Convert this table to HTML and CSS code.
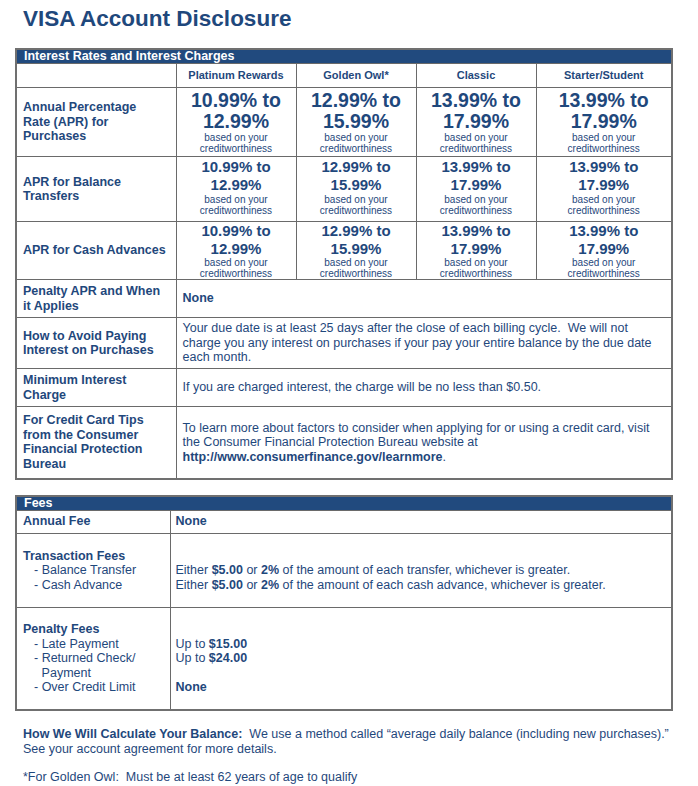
FILE: index.html
```html
<!DOCTYPE html>
<html>
<head>
<meta charset="utf-8">
<link rel="stylesheet" href="styles.css">
</head>
<body>
<div class="page">
  <h1 class="title">VISA Account Disclosure</h1>

  <table class="disc rates">
    <colgroup>
      <col class="c-label"><col class="c-rate"><col class="c-rate"><col class="c-rate"><col>
    </colgroup>
    <tr class="bar"><th colspan="5">Interest Rates and Interest Charges</th></tr>
    <tr class="colhead">
      <td></td><th>Platinum Rewards</th><th>Golden Owl*</th><th>Classic</th><th>Starter/Student</th>
    </tr>
    <tr class="r-purch">
      <th class="label">Annual Percentage Rate (APR) for Purchases</th>
      <td class="rate"><b>10.99% to<br>12.99%</b><span>based on your<br>creditworthiness</span></td>
      <td class="rate"><b>12.99% to<br>15.99%</b><span>based on your<br>creditworthiness</span></td>
      <td class="rate"><b>13.99% to<br>17.99%</b><span>based on your<br>creditworthiness</span></td>
      <td class="rate"><b>13.99% to<br>17.99%</b><span>based on your<br>creditworthiness</span></td>
    </tr>
    <tr class="r-bal">
      <th class="label">APR for Balance Transfers</th>
      <td class="rate"><b>10.99% to<br>12.99%</b><span>based on your<br>creditworthiness</span></td>
      <td class="rate"><b>12.99% to<br>15.99%</b><span>based on your<br>creditworthiness</span></td>
      <td class="rate"><b>13.99% to<br>17.99%</b><span>based on your<br>creditworthiness</span></td>
      <td class="rate"><b>13.99% to<br>17.99%</b><span>based on your<br>creditworthiness</span></td>
    </tr>
    <tr class="r-cash">
      <th class="label nowrap">APR for Cash Advances</th>
      <td class="rate"><b>10.99% to<br>12.99%</b><span>based on your<br>creditworthiness</span></td>
      <td class="rate"><b>12.99% to<br>15.99%</b><span>based on your<br>creditworthiness</span></td>
      <td class="rate"><b>13.99% to<br>17.99%</b><span>based on your<br>creditworthiness</span></td>
      <td class="rate"><b>13.99% to<br>17.99%</b><span>based on your<br>creditworthiness</span></td>
    </tr>
    <tr class="r-pen">
      <th class="label">Penalty APR and When it Applies</th>
      <td class="text" colspan="4"><b>None</b></td>
    </tr>
    <tr class="r-avoid">
      <th class="label">How to Avoid Paying Interest on Purchases</th>
      <td class="text" colspan="4">Your due date is at least 25 days after the close of each billing cycle.&nbsp; We will not charge you any interest on purchases if your pay your entire balance by the due date each month.</td>
    </tr>
    <tr class="r-min">
      <th class="label">Minimum Interest Charge</th>
      <td class="text" colspan="4">If you are charged interest, the charge will be no less than $0.50.</td>
    </tr>
    <tr class="r-tips">
      <th class="label">For Credit Card Tips from the Consumer Financial Protection Bureau</th>
      <td class="text" colspan="4">To learn more about factors to consider when applying for or using a credit card, visit the Consumer Financial Protection Bureau website at <b>http://www.consumerfinance.gov/learnmore</b>.</td>
    </tr>
  </table>

  <table class="disc fees">
    <colgroup><col class="c-flabel"><col></colgroup>
    <tr class="bar"><th colspan="2">Fees</th></tr>
    <tr class="f-annual">
      <th class="label">Annual Fee</th>
      <td class="text"><b>None</b></td>
    </tr>
    <tr class="f-trans">
      <td class="flabel">
        <b>Transaction Fees</b>
        <ul class="subs">
          <li>Balance Transfer</li>
          <li>Cash Advance</li>
        </ul>
      </td>
      <td class="fval">
        <div class="spacer"></div>
        <div>Either <b>$5.00</b> or <b>2%</b> of the amount of each transfer, whichever is greater.</div>
        <div>Either <b>$5.00</b> or <b>2%</b> of the amount of each cash advance, whichever is greater.</div>
      </td>
    </tr>
    <tr class="f-pen">
      <td class="flabel">
        <b>Penalty Fees</b>
        <ul class="subs">
          <li>Late Payment</li>
          <li>Returned Check/ Payment</li>
          <li>Over Credit Limit</li>
        </ul>
      </td>
      <td class="fval">
        <div class="spacer"></div>
        <div>Up to <b>$15.00</b></div>
        <div>Up to <b>$24.00</b></div>
        <div class="spacer"></div>
        <div><b>None</b></div>
      </td>
    </tr>
  </table>

  <div class="notes">
    <p><b>How We Will Calculate Your Balance:</b>&nbsp; We use a method called “average daily balance (including new purchases).” See your account agreement for more details.</p>
    <p>*For Golden Owl:&nbsp; Must be at least 62 years of age to qualify</p>
  </div>
</div>
</body>
</html>
```

FILE: styles.css
```css
html, body {
  margin: 0;
  padding: 0;
  background: #ffffff;
}

.page {
  width: 698px;
  padding: 0 0 0 15px;
  box-sizing: border-box;
  font-family: "Liberation Sans", Arial, sans-serif;
  color: #1f487c;
}

.title {
  margin: 6px 0 16px 8px;
  font-size: 22.5px;
  line-height: 26px;
  font-weight: bold;
}

.disc {
  border-collapse: collapse;
  table-layout: fixed;
  width: 658px;
  border: 2px solid #707070;
}

.disc td, .disc th {
  border: 1px solid #6a6a6a;
  padding: 0;
  font-size: 12.5px;
  line-height: 14.5px;
}

.c-label { width: 160px; }
.c-rate { width: 120px; }
.c-flabel { width: 154px; }

.disc .bar th {
  background: #214a7e;
  color: #ffffff;
  text-align: left;
  font-weight: bold;
  padding: 0 0 0 7px;
  height: 13px;
  line-height: 13px;
  border-bottom: 1px solid #6a6a6a;
}

.disc .colhead td, .disc .colhead th {
  height: 23px;
  font-size: 11px;
  font-weight: bold;
  text-align: center;
  vertical-align: middle;
}

.disc .label {
  text-align: left;
  vertical-align: middle;
  font-weight: bold;
  padding: 0 12px 0 6px;
}

.disc .nowrap {
  white-space: nowrap;
}

.disc .rate {
  text-align: center;
  vertical-align: top;
}

.rate b, .rate span {
  display: block;
}

.rate span {
  font-size: 10px;
  line-height: 11px;
}

.disc .r-purch .rate { padding-top: 2px; }
.r-purch .rate b { font-size: 19.5px; line-height: 21px; }
.r-purch { height: 69px; }

.r-bal { height: 65px; }
.r-cash { height: 58px; }
.r-bal .rate b { font-size: 15px; line-height: 18px; }
.r-cash .rate b { font-size: 15px; line-height: 17.5px; }
.disc .r-bal .rate { padding-top: 1px; }

.disc .text {
  text-align: left;
  vertical-align: middle;
  padding: 0 10px 0 6px;
}

.r-pen { height: 38px; }
.r-avoid { height: 51px; }
.r-min { height: 38px; }
.r-tips { height: 72px; }

.fees {
  margin-top: 15px;
}

.disc .f-annual .label, .disc .f-annual .text {
  height: 22px;
}

.disc .f-annual .text {
  padding-left: 5px;
}

.disc .flabel, .disc .fval {
  vertical-align: top;
  text-align: left;
}

.disc .flabel {
  padding: 15px 4px 15px 6px;
}

.disc .fval {
  padding: 15px 6px 15px 5px;
}

.disc .f-pen .flabel, .disc .f-pen .fval {
  padding-top: 14px;
  padding-bottom: 14px;
}

.spacer {
  height: 14.5px;
}

.subs {
  list-style: none;
  margin: 0;
  padding: 0 0 0 11px;
}

.subs li {
  padding-left: 7.6px;
  text-indent: -7.6px;
}

.subs li::before {
  content: "- ";
}

.notes {
  margin-top: 16px;
  padding-left: 8px;
  font-size: 12.5px;
  line-height: 15px;
}

.notes p {
  margin: 0 0 13px 0;
  width: 650px;
}
```
